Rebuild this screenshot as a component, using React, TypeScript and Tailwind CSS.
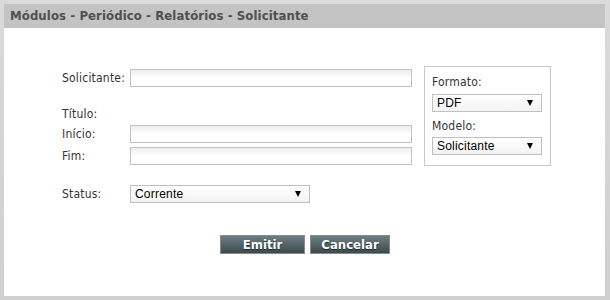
import React from 'react';

const labelFont = { fontFamily: '"DejaVu Sans Condensed", "DejaVu Sans", Tahoma, sans-serif' };
const fieldFont = { fontFamily: '"Liberation Sans", Arial, sans-serif' };

const TextInput: React.FC<{ width: string }> = ({ width }) => (
  <div className={`${width} h-[18px] border border-[#c2c2c2] bg-gradient-to-b from-[#ececec] via-white to-white`} />
);

const Select: React.FC<{ value: string; width: string }> = ({ value, width }) => (
  <div
    className={`${width} h-[18px] border border-[#c0c0c0] bg-gradient-to-b from-white to-[#f3f3f3] flex items-center justify-between pl-[4px] pr-[8px] text-[12px] text-black leading-none`}
    style={fieldFont}
  >
    <span>{value}</span>
    <span className="w-0 h-0 border-l-[3px] border-r-[3px] border-t-[6px] border-l-transparent border-r-transparent border-t-black" />
  </div>
);

const Button: React.FC<{ label: string; width: string }> = ({ label, width }) => (
  <button
    className={`${width} h-[19px] border border-[#8a8a8a] bg-gradient-to-b from-[#6e7f84] to-[#3c4a4f] text-white text-[13px] font-bold leading-none [text-shadow:0_1px_1px_#1c2528]`}
    style={labelFont}
  >
    {label}
  </button>
);

export default function App() {
  return (
    <div className="w-[610px] h-[300px] bg-white">
      <div className="w-[610px] h-[300px] bg-gradient-to-b from-[#dadada] to-[#cfcfcf] p-[4px] pr-[5px]">
        <div className="w-full h-full flex flex-col bg-white" style={labelFont}>
          {/* Header */}
          <div className="h-[24px] bg-[#c3c3c3] flex items-center pl-[6px]">
            <h1 className="text-[13px] font-bold text-[#4f4f4f] tracking-[0.1px]">
              Módulos - Periódico - Relatórios - Solicitante
            </h1>
          </div>

          {/* Body */}
          <div className="flex-1 flex flex-col pt-[38px]">
            <div className="flex pl-[58px] gap-[12px]">
              {/* Left column */}
              <div className="flex flex-col pt-[3px] text-[12px] text-[#333] leading-[14px] tracking-[0.2px]">
                <div className="flex items-center h-[18px]">
                  <span className="w-[68px]">Solicitante:</span>
                  <TextInput width="w-[282px]" />
                </div>
                <div className="mt-[20px] h-[14px]">Título:</div>
                <div className="flex items-center h-[18px] mt-[4px]">
                  <span className="w-[68px]">Início:</span>
                  <TextInput width="w-[282px]" />
                </div>
                <div className="flex items-center h-[18px] mt-[4px]">
                  <span className="w-[68px]">Fim:</span>
                  <TextInput width="w-[282px]" />
                </div>
                <div className="flex items-center h-[18px] mt-[20px]">
                  <span className="w-[68px]">Status:</span>
                  <Select value="Corrente" width="w-[180px]" />
                </div>
              </div>

              {/* Right box */}
              <div className="w-[127px] h-[100px] border border-[#c8c8c8] px-[7px] pt-[8px] flex flex-col text-[12px] text-[#333] leading-[14px] tracking-[0.2px]">
                <span>Formato:</span>
                <div className="mt-[5px]">
                  <Select value="PDF" width="w-[110px]" />
                </div>
                <span className="mt-[7px]">Modelo:</span>
                <div className="mt-[4px]">
                  <Select value="Solicitante" width="w-[110px]" />
                </div>
              </div>
            </div>

            {/* Buttons */}
            <div className="flex justify-center gap-[5px] mt-[32px] pl-[1px]">
              <Button label="Emitir" width="w-[85px]" />
              <Button label="Cancelar" width="w-[80px]" />
            </div>
          </div>
        </div>
      </div>
    </div>
  );
}
